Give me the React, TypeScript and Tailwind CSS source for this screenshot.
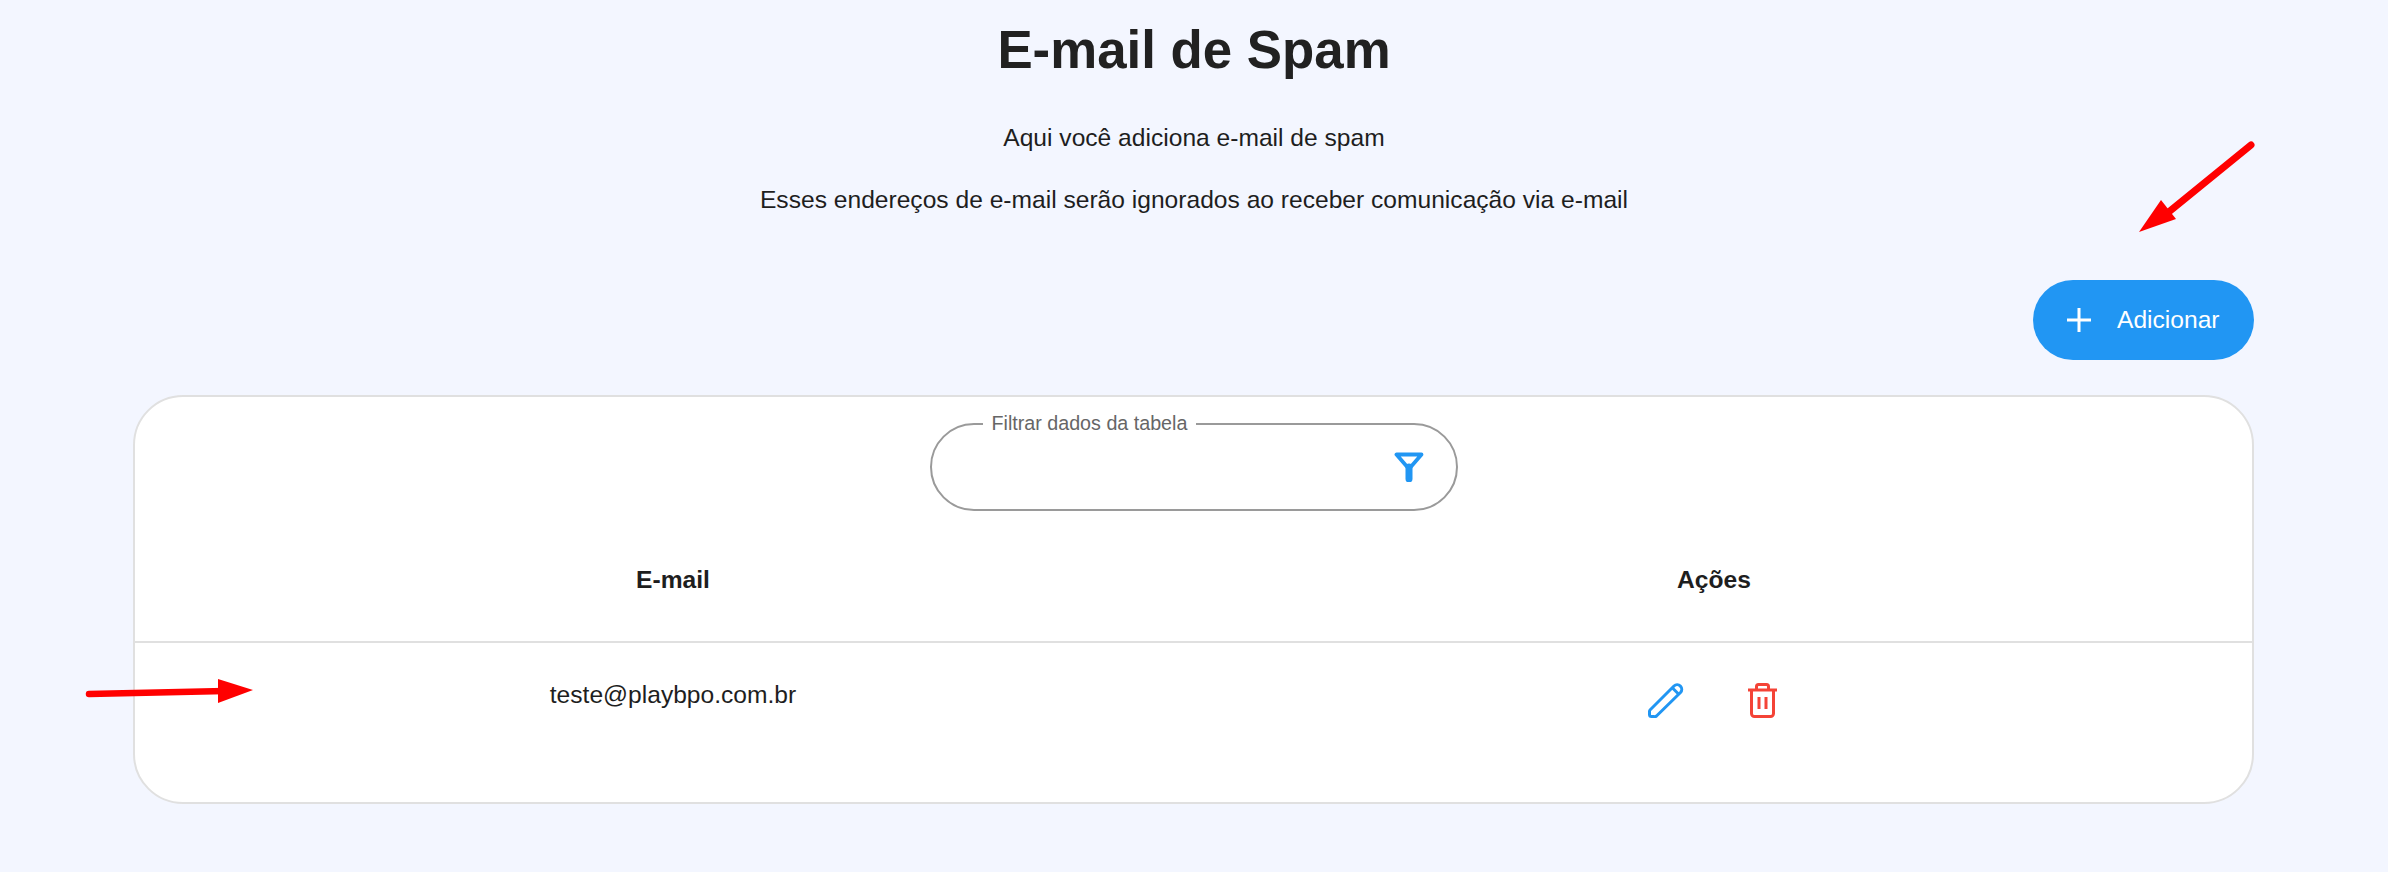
const FilterIcon = () => (
  <svg viewBox="0 0 30 30" className="h-[30px] w-[30px]" fill="none">
    <path d="M2.5 2.5h25L15 17z" stroke="#2196f3" strokeWidth="3.8" strokeLinejoin="round" />
    <path d="M15 15v12" stroke="#2196f3" strokeWidth="7" strokeLinecap="round" />
  </svg>
)

const PencilIcon = () => (
  <svg viewBox="0 0 36 36" className="h-[36px] w-[36px]" fill="none" stroke="#2196f3" strokeWidth="3" strokeLinejoin="round">
    <path d="M2 28 L26 4 a4.6 4.6 0 0 1 6.5 6.5 L8.5 34 a3 3 0 0 1 -3 .5 H3.5 a2 2 0 0 1 -2 -2 V30 a3 3 0 0 1 .5 -2z" />
    <path d="M24.5 6 L30.5 12" />
  </svg>
)

const TrashIcon = () => (
  <svg viewBox="0 0 29 35" className="mt-[1px] h-[35px] w-[29px]" fill="none" stroke="#f44336" strokeWidth="3">
    <path d="M0 7h29" />
    <path d="M8.5 7V3.5a2 2 0 0 1 2-2h8a2 2 0 0 1 2 2V7" />
    <path d="M3.5 7v23.5a3 3 0 0 0 3 3h16a3 3 0 0 0 3-3V7" />
    <path d="M11 14v12M18 14v12" />
  </svg>
)

export default function App() {
  return (
    <div className="relative h-[872px] overflow-hidden bg-[#f3f6ff] font-['Liberation_Sans',sans-serif] text-[#1e1e1e]">
      <div className="flex flex-col items-center">
        <h1 className="mt-[18px] text-[52.8px] leading-[64px] font-bold text-[#212121]">E-mail de Spam</h1>
        <p className="mt-[40px] text-[24.6px] leading-[32px]">Aqui você adiciona e-mail de spam</p>
        <p className="mt-[30px] text-[24.6px] leading-[32px]">Esses endereços de e-mail serão ignorados ao receber comunicação via e-mail</p>
      </div>

      <div className="mt-[64px] flex justify-end pr-[134px]">
        <button className="flex h-[80px] w-[221px] items-center rounded-full bg-[#2196f3] pl-[34px] text-[24.6px] text-white">
          <svg viewBox="0 0 24 24" className="h-[24px] w-[24px]" fill="none" stroke="white" strokeWidth="3">
            <path d="M12 0v24M0 12h24" />
          </svg>
          <span className="ml-[26px]">Adicionar</span>
        </button>
      </div>

      <div className="mt-[35px] ml-[133px] h-[409px] w-[2121px] rounded-[50px] border-2 border-[#e0e0e0] bg-white">
        <div className="flex justify-center pt-[15px]">
          <fieldset className="flex h-[99px] w-[528px] items-center justify-end rounded-full border-2 border-[#9a9a9a] pr-[32px]">
            <legend className="ml-[51px] px-[9px] pb-[2px] text-[19.7px] leading-[22px] text-[#666666]">Filtrar dados da tabela</legend>
            <div className="mt-[-12px]">
              <FilterIcon />
            </div>
          </fieldset>
        </div>

        <div className="mt-[53px] grid grid-cols-[1076px_1006px] border-b-2 border-[#e0e0e0] pb-[45px] text-center text-[24.6px] leading-[32px] font-bold">
          <div>E-mail</div>
          <div>Ações</div>
        </div>

        <div className="grid grid-cols-[1076px_1006px] pt-[36px] text-center text-[24.6px] leading-[32px]">
          <div>teste@playbpo.com.br</div>
          <div className="mr-[3px] flex justify-center gap-[64px] pt-[3px]">
            <PencilIcon />
            <TrashIcon />
          </div>
        </div>
      </div>

      {/* setas vermelhas por cima da tela */}
      <svg className="pointer-events-none absolute top-0 left-0" width="2388" height="872">
        <path d="M2251 145 L2165 215" stroke="#ff0000" strokeWidth="7" strokeLinecap="round" />
        <polygon points="2139,232 2161,200 2176,219" fill="#ff0000" />
        <path d="M89 694 L225 691" stroke="#ff0000" strokeWidth="6.5" strokeLinecap="round" />
        <polygon points="253,690 218,679 218,703" fill="#ff0000" />
      </svg>
    </div>
  )
}
